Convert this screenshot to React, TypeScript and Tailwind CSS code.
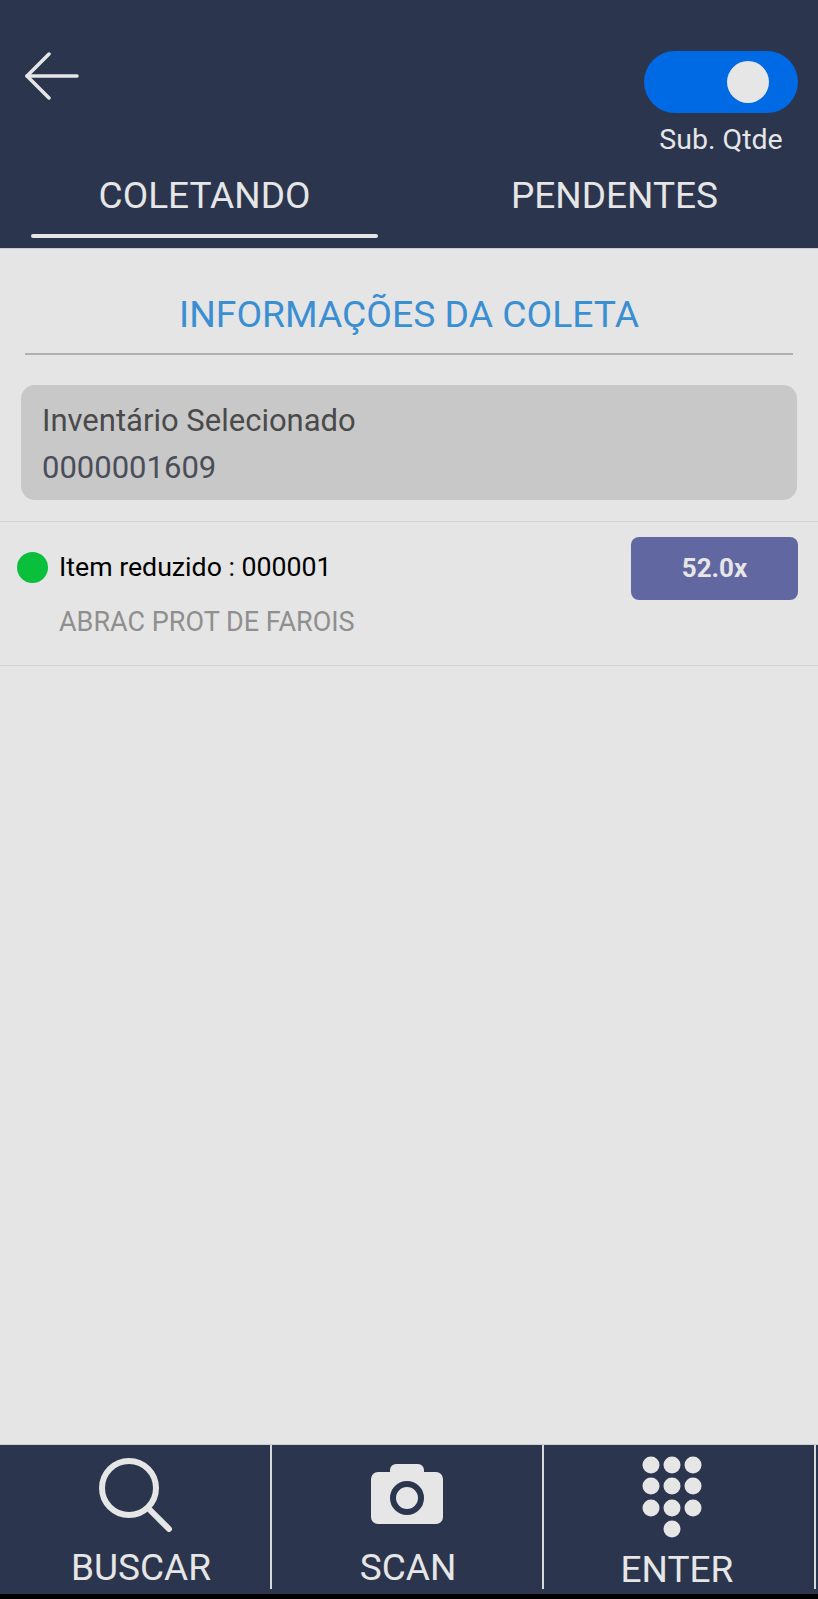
const font = "[font-family:Roboto,'Noto_Sans',sans-serif]";

function BackArrow() {
  return (
    <svg width="56" height="48" viewBox="0 0 56 48" fill="none" stroke="#e6e6e6" strokeWidth="3.5" strokeLinecap="round" strokeLinejoin="round">
      <path d="M53 24H3" />
      <path d="M25 2 3 24l22 22" />
    </svg>
  );
}

function SearchIcon() {
  return (
    <svg width="74" height="74" viewBox="0 0 74 74" fill="none" stroke="#e6e6e6" strokeWidth="6" strokeLinecap="round">
      <circle cx="30" cy="30" r="27" />
      <path d="M49 50 70 71" />
    </svg>
  );
}

function CameraIcon() {
  return (
    <svg width="74" height="62" viewBox="0 0 74 62">
      <path
        fill="#e6e6e6"
        d="M20 9V7a6 6 0 0 1 6-6h22a6 6 0 0 1 6 6v2h12a7 7 0 0 1 7 7v38a7 7 0 0 1-7 7H8a7 7 0 0 1-7-7V16a7 7 0 0 1 7-7z"
      />
      <circle cx="37" cy="35" r="14" fill="none" stroke="#2b354d" strokeWidth="6" />
    </svg>
  );
}

function KeypadIcon() {
  const dots = [
    [10, 10], [31, 10], [52, 10],
    [10, 31], [31, 31], [52, 31],
    [10, 53], [31, 53], [52, 53],
    [31, 74],
  ];
  return (
    <svg width="62" height="84" viewBox="0 0 62 84" fill="#e6e6e6">
      {dots.map(([x, y]) => (
        <circle key={`${x}-${y}`} cx={x} cy={y} r="8.5" />
      ))}
    </svg>
  );
}

function Header() {
  return (
    <header className="h-[249px] bg-[#2b354d] border-b border-[#c9ccd4] flex flex-col">
      <div className="flex justify-between items-start pt-[51px] pl-[24px] pr-[20px] h-[176px]">
        <div className="mt-[1px]">
          <BackArrow />
        </div>
        <div className="flex flex-col items-center">
          <div className="w-[154px] h-[62px] rounded-full bg-[#0069e4] flex items-center justify-end pr-[29px]">
            <div className="w-[42px] h-[42px] rounded-full bg-[#e6e6e6]" />
          </div>
          <span className="mt-[11px] text-[28.5px] leading-[32px] text-[#e6e6e6]">Sub. Qtde</span>
        </div>
      </div>
      <div className="flex">
        <div className="ml-[31px] w-[347px] flex flex-col items-center">
          <span className="text-[37px] leading-[40px] text-[#e6e6e6]">COLETANDO</span>
          <div className="mt-[18px] w-full h-[4px] rounded-full bg-[#e6e6e6]" />
        </div>
        <div className="ml-[133px] text-[37px] leading-[40px] text-[#e6e6e6]">PENDENTES</div>
      </div>
    </header>
  );
}

function BottomItem({ label, icon, textClass, iconClass }: { label: string; icon: React.ReactNode; textClass: string; iconClass: string }) {
  return (
    <div className="w-[272px] h-full relative flex flex-col items-center">
      <div className={`h-[103px] flex items-center justify-center ${iconClass}`}>{icon}</div>
      <span className={`text-[37px] leading-[40px] text-[#e6e6e6] ${textClass}`}>{label}</span>
      <div className="absolute right-0 top-0 w-[2px] h-[144px] bg-[#d9d9d9]" />
    </div>
  );
}

export default function App() {
  return (
    <div className={`w-[818px] h-[1599px] bg-[#e5e5e5] flex flex-col ${font}`}>
      <Header />

      <main className="flex-1">
        <h1 className="mt-[41px] text-center text-[37.3px] leading-[48px] text-[#3a8fd3]">INFORMAÇÕES DA COLETA</h1>
        <div className="mt-[15px] mx-[25px] h-[2px] bg-[#b0b0b0]" />

        <div className="mt-[30px] mx-[21px] w-[776px] h-[115px] rounded-[14px] bg-[#c8c8c8] pl-[21px] pt-[18px]">
          <div className="text-[31px] leading-[36px] text-[#4a4a4a]">Inventário Selecionado</div>
          <div className="mt-[11px] text-[31px] leading-[36px] text-[#4a4e5a]">0000001609</div>
        </div>

        <div className="mt-[21px] border-y border-[#d2d2d2] h-[145px] flex justify-between pl-[17px] pr-[20px]">
          <div>
            <div className="flex items-center mt-[30px]">
              <div className="w-[31px] h-[31px] rounded-full bg-[#0abf3c]" />
              <span className="ml-[11px] text-[26.7px] leading-[31px] text-black">Item reduzido : 000001</span>
            </div>
            <div className="ml-[42px] mt-[24px] text-[27px] leading-[31px] text-[#8f8f8f]">ABRAC PROT DE FAROIS</div>
          </div>
          <div className="mt-[15px] w-[167px] h-[63px] rounded-[8px] bg-[#6167a1] flex items-center justify-center text-[26px] font-bold text-[#e6e6e6]">
            52.0x
          </div>
        </div>
      </main>

      <nav className="h-[150px] bg-[#2b354d] flex border-t border-[#c9ccd4]">
        <BottomItem label="BUSCAR" icon={<SearchIcon />} textClass="ml-[10px]" iconClass="pb-[3px]" />
        <BottomItem label="SCAN" icon={<CameraIcon />} textClass="" iconClass="pb-[5px] mr-[3px]" />
        <BottomItem label="ENTER" icon={<KeypadIcon />} textClass="mt-[2px] mr-[6px]" iconClass="mr-[16px]" />
      </nav>
      <div className="h-[5px] bg-black" />
    </div>
  );
}
